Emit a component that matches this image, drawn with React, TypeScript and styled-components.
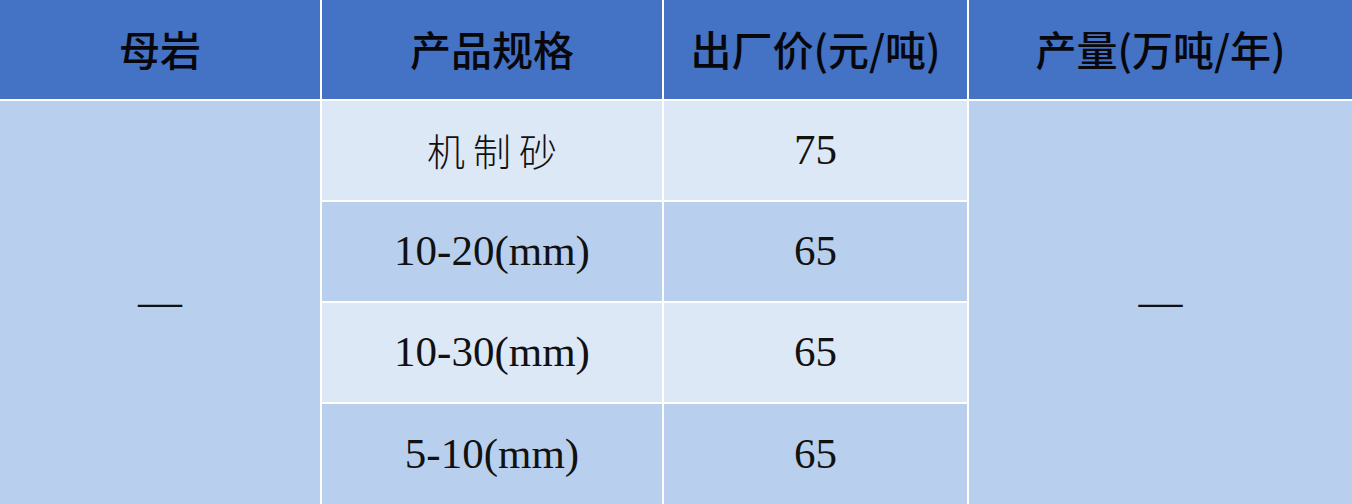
import React from "react"
import styled, { createGlobalStyle } from "styled-components"

const GlobalStyle = createGlobalStyle`
  html, body {
    margin: 0;
    padding: 0;
    background: #ffffff;
  }
`

const rows = [
  { spec: "机制砂", price: "75", cjk: true },
  { spec: "10-20(mm)", price: "65" },
  { spec: "10-30(mm)", price: "65" },
  { spec: "5-10(mm)", price: "65" },
]

const Table = styled.div`
  display: grid;
  grid-template-columns: 320px 340px 303px 1fr;
  grid-template-rows: 99px 99px 99px 99px 1fr;
  gap: 2px;
  width: 1352px;
  height: 504px;
  background: #ffffff;
`

const HeadCell = styled.div`
  display: flex;
  align-items: center;
  justify-content: center;
  background: #4472c4;
  color: #08080c;
  font-family: "Noto Sans CJK SC", "Noto Sans", sans-serif;
  font-weight: 500;
  font-size: 41px;
  padding-bottom: 4px;
`

const SpanCell = styled.div`
  grid-row: 2 / span 4;
  display: flex;
  align-items: center;
  justify-content: center;
  background: #b8d0ee;
  color: #111;
  font-family: "Liberation Serif", serif;
  font-size: 44px;
  padding-bottom: 2px;
`

const Cell = styled.div<{ $light: boolean; $cjk?: boolean }>`
  display: flex;
  align-items: center;
  justify-content: center;
  background: ${p => (p.$light ? "#dde8f6" : "#b8d0ee")};
  color: #111;
  font-family: ${p =>
    p.$cjk ? `"Noto Sans CJK SC", sans-serif` : `"Liberation Serif", serif`};
  font-size: ${p => (p.$cjk ? "38px" : "43px")};
  font-weight: ${p => (p.$cjk ? 300 : 400)};
  letter-spacing: ${p => (p.$cjk ? "8px" : "0")};
  padding-left: ${p => (p.$cjk ? "8px" : "0")};
  padding-bottom: 2px;
`

export default function App() {
  return (
    <>
      <GlobalStyle />
      <Table>
        <HeadCell>母岩</HeadCell>
        <HeadCell>产品规格</HeadCell>
        <HeadCell>出厂价(元/吨)</HeadCell>
        <HeadCell>产量(万吨/年)</HeadCell>
        <SpanCell style={{ gridColumn: 1 }}>—</SpanCell>
        {rows.map((r, i) => (
          <React.Fragment key={r.spec}>
            <Cell $light={i % 2 === 0} $cjk={r.cjk} style={{ gridColumn: 2, gridRow: i + 2 }}>
              {r.spec}
            </Cell>
            <Cell $light={i % 2 === 0} style={{ gridColumn: 3, gridRow: i + 2 }}>
              {r.price}
            </Cell>
          </React.Fragment>
        ))}
        <SpanCell style={{ gridColumn: 4 }}>—</SpanCell>
      </Table>
    </>
  )
}
